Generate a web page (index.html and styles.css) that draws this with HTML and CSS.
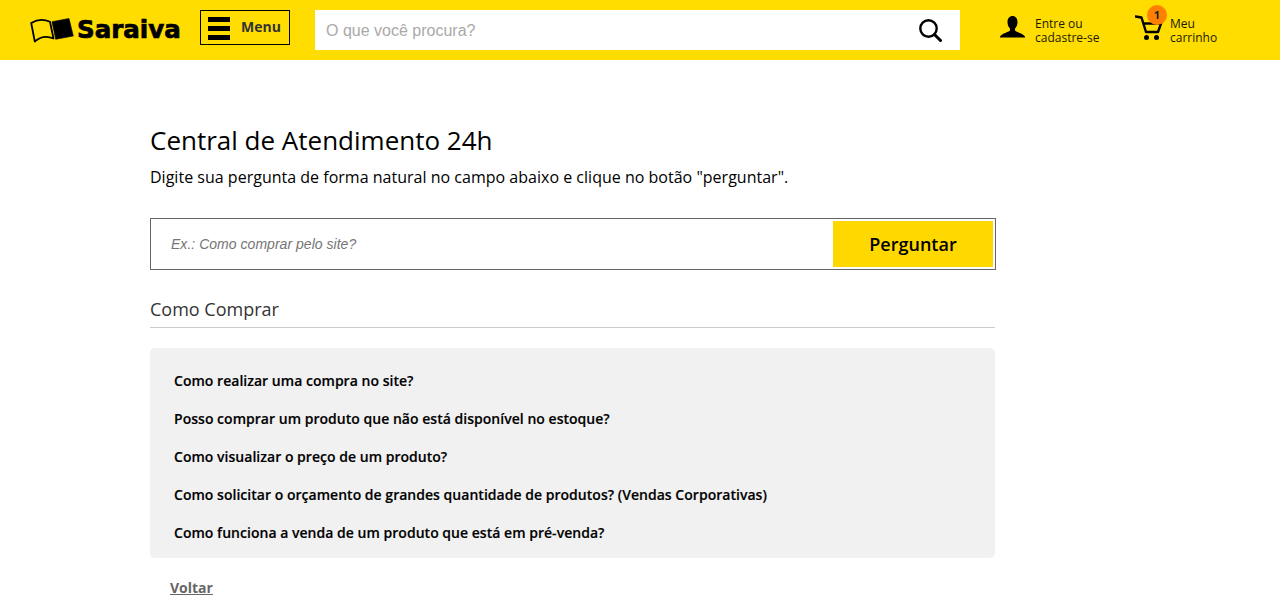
FILE: index.html
```html
<!DOCTYPE html>
<html lang="pt-BR">
<head>
<meta charset="utf-8">
<title>Central de Atendimento 24h</title>
<link rel="stylesheet" href="styles.css">
</head>
<body>
<header class="topbar">
  <a class="logo" href="#">
    <svg class="logo-book" width="44" height="25" viewBox="0 0 44 25">
      <path d="M1.200 5 C7 1.500 14 1 20 3.800 L23.500 20.500 C17 17.800 10 19 4.800 23.500 Z" fill="none" stroke="#000" stroke-width="1.800" stroke-linejoin="round"/>
      <path d="M22 3.700 L39 0.500 L43.300 18 L25.700 21.300 Z" fill="#000" stroke="#000" stroke-width="0.600" stroke-linejoin="round"/>
    </svg>
    <span class="logo-text">Saraiva</span>
  </a>
  <button class="menu-btn" type="button">
    <span class="burger"><i></i><i></i><i></i></span>
    <span class="menu-label">Menu</span>
  </button>
  <form class="site-search">
    <input class="site-search-input" type="text" placeholder="O que você procura?">
    <svg class="site-search-icon" width="23" height="23" viewBox="0 0 23 23">
      <circle cx="9.500" cy="9.500" r="8.200" fill="none" stroke="#000" stroke-width="2.400"/>
      <path d="M15.500 15.500 L21.500 21.500" stroke="#000" stroke-width="3" stroke-linecap="round"/>
    </svg>
  </form>
  <a class="account" href="#">
    <svg class="account-icon" width="25" height="22" viewBox="0 0 25 22">
      <path d="M12.500 0 C15.500 0 17.500 2.500 17.500 6 C17.500 9 16.500 11 15 12.500 L15 14.500 C17 16.500 22 17 25 20.500 L25 21.500 L0 21.500 L0 20.500 C3 17 8 16.500 10 14.500 L10 12.500 C8.500 11 7.500 9 7.500 6 C7.500 2.500 9.500 0 12.500 0 Z" fill="#000"/>
    </svg>
    <span class="nav-text">Entre ou<br>cadastre-se</span>
  </a>
  <a class="cart" href="#">
    <span class="cart-icon">
      <svg width="28" height="26" viewBox="0 0 28 26">
        <path d="M0.500 1.500 L6.500 2.500 L11 17 L23 17 L26 8.500 L8.500 8.500" fill="none" stroke="#000" stroke-width="2.400" stroke-linejoin="round" stroke-linecap="round"/>
        <circle cx="11.500" cy="22.500" r="2.500" fill="#000"/>
        <circle cx="21.500" cy="22.500" r="2.500" fill="#000"/>
      </svg>
      <span class="cart-badge">1</span>
    </span>
    <span class="nav-text">Meu<br>carrinho</span>
  </a>
</header>
<main class="content">
  <h1 class="title">Central de Atendimento 24h</h1>
  <p class="subtitle">Digite sua pergunta de forma natural no campo abaixo e clique no botão "perguntar".</p>
  <form class="ask">
    <input class="ask-input" type="text" placeholder="Ex.: Como comprar pelo site?">
    <button class="ask-btn" type="button">Perguntar</button>
  </form>
  <h2 class="section-title">Como Comprar</h2>
  <ul class="faq">
    <li><a href="#">Como realizar uma compra no site?</a></li>
    <li><a href="#">Posso comprar um produto que não está disponível no estoque?</a></li>
    <li><a href="#">Como visualizar o preço de um produto?</a></li>
    <li><a href="#">Como solicitar o orçamento de grandes quantidade de produtos? (Vendas Corporativas)</a></li>
    <li><a href="#">Como funciona a venda de um produto que está em pré-venda?</a></li>
  </ul>
  <a class="back" href="#">Voltar</a>
</main>
</body>
</html>
```
FILE: styles.css
```css
* { box-sizing: border-box; }
html, body { margin: 0; padding: 0; overflow: hidden; height: 600px; }
body { background: #fff; font-family: "Open Sans", sans-serif; color: #000; }
a { color: inherit; text-decoration: none; }

.topbar { height: 60px; background: #ffdd00; display: flex; align-items: flex-start; padding-left: 30px; }
.logo { display: flex; align-items: flex-start; width: 170px; padding-top: 18px; }
.logo-book { flex: none; margin-right: 3px; }
.logo-text { font-family: "DejaVu Sans", sans-serif; font-weight: 700; font-size: 24.5px; line-height: 24px; -webkit-text-stroke: 0.7px #000; }
.menu-btn { width: 90px; height: 35px; margin-top: 10px; border: 1px solid #000; background: transparent; padding: 0 8px 0 7px; display: flex; align-items: center; gap: 11px; font-family: "Open Sans", sans-serif; }
.burger { display: flex; flex-direction: column; gap: 4px; width: 22px; margin-top: 2px; }
.burger i { display: block; height: 5px; background: #000; }
.menu-label { font-size: 14px; font-weight: 700; color: #333; margin-top: -3px; }
.site-search { width: 645px; height: 40px; margin-top: 10px; margin-left: 25px; background: #fff; display: flex; align-items: center; padding-right: 18px; }
.site-search-input { flex: 1; border: 0; outline: 0; height: 100%; padding: 2px 11px 0; font-family: "Liberation Sans", sans-serif; font-size: 16px; background: transparent; }
.site-search-input::placeholder { color: #a9a9a9; opacity: 1; }
.account { display: flex; align-items: flex-start; gap: 10px; margin-left: 40px; width: 135px; padding-top: 16px; }
.account-icon { flex: none; }
.cart { display: flex; align-items: flex-start; gap: 7px; padding-top: 15px; }
.nav-text { font-size: 12px; line-height: 14px; color: #1a1a00; }
.account .nav-text { margin-top: 1px; }
.cart .nav-text { margin-top: 2px; }
.cart-icon { position: relative; display: block; width: 28px; height: 26px; }
.cart-icon svg { display: block; }
.cart-badge { position: absolute; left: 12px; top: -10px; width: 20px; height: 20px; border-radius: 50%; background: #ff7f00; font-size: 11px; font-weight: 700; line-height: 20px; text-align: center; color: #222; }

.content { width: 846px; margin-left: 150px; padding-top: 63px; }
.title { margin: 0; font-size: 26px; font-weight: 400; line-height: 34px; }
.subtitle { margin: 9px 0 0; font-size: 16px; line-height: 22px; letter-spacing: 0.012px; }
.ask { margin-top: 30px; height: 52px; border: 1px solid #666; display: flex; align-items: center; padding: 2px; }
.ask-input { flex: 1; height: 100%; border: 0; outline: 0; padding: 0 18px; font-family: "Liberation Sans", sans-serif; font-size: 14px; font-style: italic; letter-spacing: 0.03px; }
.ask-input::placeholder { color: #757575; opacity: 1; }
.ask-btn { width: 160px; height: 46px; border: 0; background: #ffd800; font-family: "Open Sans", sans-serif; font-size: 18px; font-weight: 600; color: #000; }
.section-title { width: 845px; margin: 26px 0 0; padding-bottom: 5px; border-bottom: 1px solid #ccc; font-size: 18px; font-weight: 400; line-height: 26px; color: #333; }
.faq { width: 845px; list-style: none; margin: 20px 0 0; padding: 23px 24px 15px; background: #f1f1f1; border-radius: 5px; }
.faq li { font-size: 14px; font-weight: 600; line-height: 20px; margin-bottom: 18px; letter-spacing: 0.025px; color: #000; -webkit-text-stroke: 0.15px #000; }
.faq li:last-child { margin-bottom: 0; }
.back { display: inline-block; margin: 20px 0 0 20px; font-size: 14px; font-weight: 700; line-height: 20px; color: #666; text-decoration: underline; }
```
